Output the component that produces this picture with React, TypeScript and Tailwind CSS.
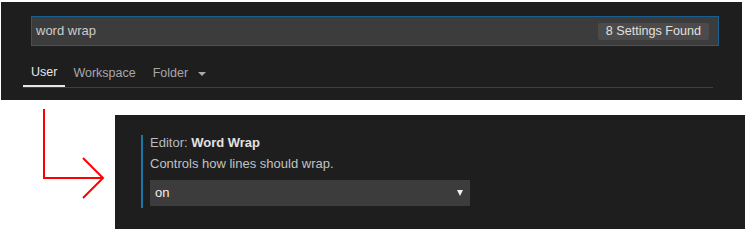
export default function App() {
  return (
    <div
      className="w-[745px] h-[250px] bg-white overflow-hidden"
      style={{ fontFamily: '"Liberation Sans", Arial, sans-serif' }}
    >
      {/* settings header */}
      <div className="ml-[1px] mt-[2px] w-[741px] h-[98px] bg-[#1e1e1e] pt-[14px]">
        <div className="ml-[30px] w-[688px] h-[30px] bg-[#3c3c3c] border border-[#17608f] flex items-center justify-between pl-[4px] pr-[9px]">
          <span className="text-[13px] text-[#cccccc]">word wrap</span>
          <span className="h-[17px] px-[8px] bg-[#4b4b4b] rounded-[2px] text-[12.6px] leading-[17px] text-[#e0e0e0]">
            8 Settings Found
          </span>
        </div>
        <div className="ml-[22px] mt-[14px] w-[690px] border-b border-[#404040] flex">
          <div className="h-[27px] px-[8px] flex items-center text-[12.5px] text-[#e7e7e7] border-b-2 border-[#e7e7e7] -mb-[1px]">
            User
          </div>
          <div className="h-[27px] px-[8px] flex items-center text-[12.5px] text-[#a8a8a8]">
            Workspace
          </div>
          <div className="h-[27px] pl-[9px] pr-[8px] flex items-center gap-[10px] text-[12.5px] text-[#a8a8a8]">
            Folder
            <svg width="8" height="4" viewBox="0 0 8 4">
              <path d="M0 0 L8 0 L4 4 Z" fill="#a8a8a8" />
            </svg>
          </div>
        </div>
      </div>

      {/* setting detail */}
      <div className="mt-[15px] flex">
        <div className="w-[115px] h-[114px]">
          <svg width="115" height="114" viewBox="0 0 115 114" className="overflow-visible">
            <path
              d="M44 -6 L44 63 L103 63 M83 43 L103 63 L83 83"
              fill="none"
              stroke="#ff0000"
              strokeWidth="2"
            />
          </svg>
        </div>
        <div className="w-[630px] h-[114px] bg-[#1e1e1e] pt-[20px] pl-[26px]">
          <div className="border-l-2 border-[#1a78a8] pl-[7px] pb-[2px] w-[329px]">
            <div className="text-[13px] leading-[15px] text-[#bbbbbb]">
              Editor: <span className="font-bold text-[#e2e2e2]">Word Wrap</span>
            </div>
            <div className="mt-[6px] text-[13px] leading-[15px] text-[#c2c2c2]">
              Controls how lines should wrap.
            </div>
            <div className="mt-[9px] w-[320px] h-[26px] bg-[#3c3c3c] flex items-center justify-between pl-[5px] pr-[7px]">
              <span className="text-[13px] text-[#f0f0f0]">on</span>
              <svg width="6" height="6" viewBox="0 0 6 6">
                <path d="M0 0 L6 0 L3 6 Z" fill="#f0f0f0" />
              </svg>
            </div>
          </div>
        </div>
      </div>
    </div>
  );
}
